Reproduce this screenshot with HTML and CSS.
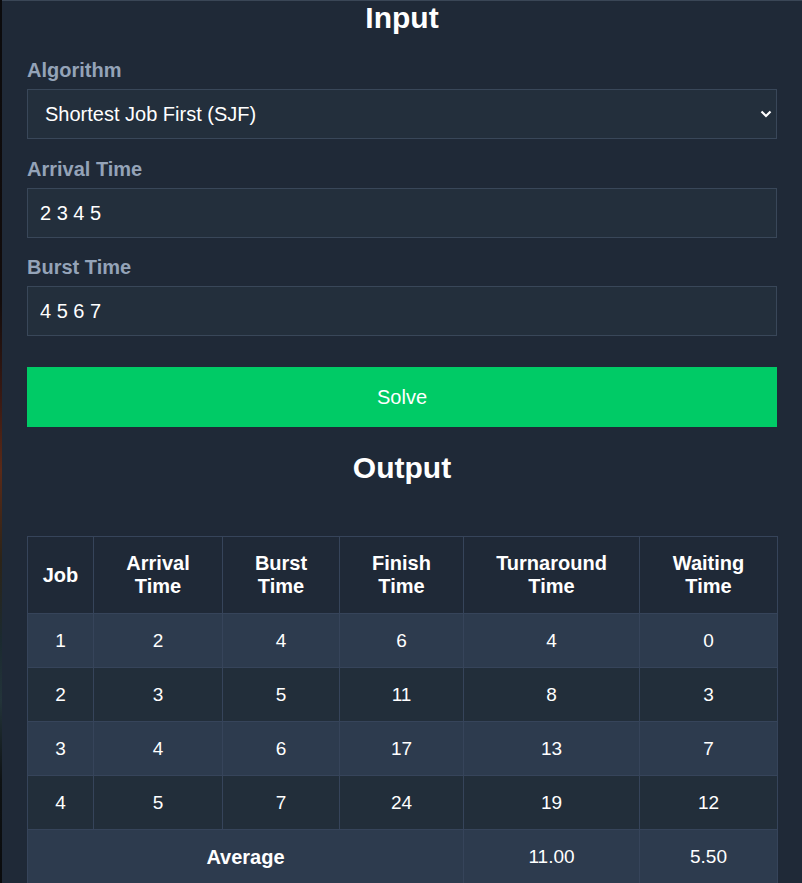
FILE: index.html
```html
<!DOCTYPE html>
<html>
<head>
<meta charset="utf-8">
<link rel="stylesheet" href="styles.css">
</head>
<body>
<div class="page">
  <main class="panel">
    <h2 class="title">Input</h2>
    <label class="label">Algorithm</label>
    <div class="select-wrap">
      <select class="field select">
        <option>Shortest Job First (SJF)</option>
      </select>
      <svg class="chev" width="12" height="8" viewBox="0 0 12 8"><path d="M1.5 1.5 L6 6 L10.5 1.5" fill="none" stroke="#fff" stroke-width="2.2"/></svg>
    </div>
    <label class="label">Arrival Time</label>
    <input class="field input" value="2 3 4 5">
    <label class="label">Burst Time</label>
    <input class="field input" value="4 5 6 7">
    <button class="solve">Solve</button>
    <h2 class="title out">Output</h2>
    <table class="tbl">
      <colgroup>
        <col class="c1"><col class="c2"><col class="c3"><col class="c4"><col class="c5"><col class="c6">
      </colgroup>
      <thead>
        <tr><th>Job</th><th>Arrival<br>Time</th><th>Burst<br>Time</th><th>Finish<br>Time</th><th>Turnaround<br>Time</th><th>Waiting<br>Time</th></tr>
      </thead>
      <tbody>
        <tr class="odd"><td>1</td><td>2</td><td>4</td><td>6</td><td>4</td><td>0</td></tr>
        <tr class="even"><td>2</td><td>3</td><td>5</td><td>11</td><td>8</td><td>3</td></tr>
        <tr class="odd"><td>3</td><td>4</td><td>6</td><td>17</td><td>13</td><td>7</td></tr>
        <tr class="even"><td>4</td><td>5</td><td>7</td><td>24</td><td>19</td><td>12</td></tr>
        <tr class="odd"><td colspan="4" class="avg">Average</td><td>11.00</td><td>5.50</td></tr>
      </tbody>
    </table>
  </main>
</div>
</body>
</html>
```
FILE: styles.css
```css
html, body {
  margin: 0;
  padding: 0;
  height: 883px;
  overflow: hidden;
}
body {
  background: linear-gradient(to bottom, #0b0b0d 0px, #120c0c 300px, #3a1a14 400px, #5a2a18 470px, #2c2418 560px, #1b2a30 640px, #23343a 700px, #0e1214 780px, #0a0b0d 883px);
  font-family: "Liberation Sans", Arial, sans-serif;
  color: #fff;
}
.page {
  padding-left: 2px;
}
.panel {
  background: #1f2937;
  border-top: 1px solid #3a4656;
  padding: 0 25px 40px 25px;
  display: flex;
  flex-direction: column;
  min-height: 900px;
}
.title {
  margin: 0;
  font-size: 30px;
  line-height: 34px;
  font-weight: bold;
  text-align: center;
  color: #fff;
}
.label {
  margin-top: 24px;
  margin-bottom: 8px;
  font-size: 20px;
  line-height: 22px;
  font-weight: bold;
  color: #94a3b8;
}
.input + .label {
  margin-top: 18px;
}
.select-wrap + .label {
  margin-top: 19px;
}
.field {
  box-sizing: border-box;
  width: 100%;
  height: 50px;
  background: #232f3c;
  border: 1px solid #394759;
  color: #fff;
  font-family: "Liberation Sans", Arial, sans-serif;
  font-size: 20px;
  margin: 0;
  outline: none;
  border-radius: 0;
}
.input {
  padding: 0 12px;
}
.select-wrap {
  position: relative;
}
.select {
  appearance: none;
  -webkit-appearance: none;
  padding: 0 17px;
}
.chev {
  position: absolute;
  right: 5px;
  top: 21px;
}
.solve {
  margin-top: 31px;
  height: 60px;
  border: none;
  background: #00cb66;
  color: #fff;
  font-family: "Liberation Sans", Arial, sans-serif;
  font-size: 20px;
  padding: 0;
}
.out {
  margin-top: 24px;
}
.tbl {
  margin-top: 51px;
  width: 750px;
  border-collapse: collapse;
  table-layout: fixed;
  font-size: 19px;
}
.c1 { width: 66px; }
.c2 { width: 129px; }
.c3 { width: 117px; }
.c4 { width: 124px; }
.c5 { width: 176px; }
.c6 { width: 138px; }
.tbl th, .tbl td {
  border: 1px solid #36445a;
  text-align: center;
  padding: 0;
  color: #fff;
}
.tbl th {
  height: 76px;
  font-size: 20px;
  line-height: 23px;
  font-weight: bold;
  background: #1f2937;
}
.tbl td {
  height: 53px;
  line-height: 22px;
}
.odd td {
  background: #2d3b4e;
}
.even td {
  background: #222e3a;
}
.tbl td.avg {
  font-weight: bold;
  font-size: 20px;
}
```
